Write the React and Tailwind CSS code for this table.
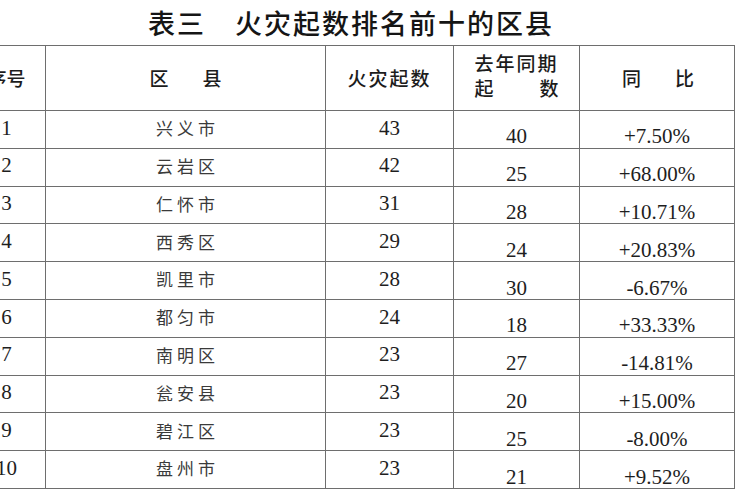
const rows = [
  ["1", "兴义市", "43", "40", "+7.50%"],
  ["2", "云岩区", "42", "25", "+68.00%"],
  ["3", "仁怀市", "31", "28", "+10.71%"],
  ["4", "西秀区", "29", "24", "+20.83%"],
  ["5", "凯里市", "28", "30", "-6.67%"],
  ["6", "都匀市", "24", "18", "+33.33%"],
  ["7", "南明区", "23", "27", "-14.81%"],
  ["8", "瓮安县", "23", "20", "+15.00%"],
  ["9", "碧江区", "23", "25", "-8.00%"],
  ["10", "盘州市", "23", "21", "+9.52%"],
];

const cjk = "font-['Noto_Sans_CJK_SC',sans-serif]";
const serif = "font-['Liberation_Serif','Times_New_Roman',serif]";
const cell = "border-[1.5px] border-[#6e6e6e] p-0 text-center";

export default function App() {
  return (
    <div className="w-[750px] h-[500px] bg-white overflow-hidden">
      <div className="ml-[-33px] w-[766px]">
        {/* title */}
        <div className={`h-[45px] pt-[2px] pl-[2px] flex items-center justify-center text-[27px] tracking-[2px] font-medium text-[#151515] ${cjk}`}>
          表三　火灾起数排名前十的区县
        </div>

        <table className="border-collapse table-fixed w-[766px]">
          <colgroup>
            <col className="w-[78px]" />
            <col className="w-[280px]" />
            <col className="w-[128px]" />
            <col className="w-[126px]" />
            <col className="w-[155px]" />
          </colgroup>
          <thead>
            <tr className={`h-[65px] text-[19px] font-medium text-[#1c1c1c] ${cjk}`}>
              <th className={`${cell} font-medium`}>序号</th>
              <th className={`${cell} font-medium`}>
                <div className="flex justify-center gap-[34px]">
                  <span>区</span>
                  <span>县</span>
                </div>
              </th>
              <th className={`${cell} font-medium tracking-[2px]`}>火灾起数</th>
              <th className={`${cell} font-medium`}>
                <div className="w-[84px] mx-auto leading-[25px] pb-[6px]">
                  <div className="tracking-[2px] text-left">去年同期</div>
                  <div className="flex justify-between">
                    <span>起</span>
                    <span>数</span>
                  </div>
                </div>
              </th>
              <th className={`${cell} font-medium`}>
                <div className="flex justify-center gap-[34px] pl-[2px]">
                  <span>同</span>
                  <span>比</span>
                </div>
              </th>
            </tr>
          </thead>
          <tbody>
            {rows.map((r) => (
              <tr key={r[0]} className="h-[37.8px]">
                <td className={`${cell} ${serif} text-[21px] text-[#1e1e1e] pb-[2px]`}>{r[0]}</td>
                <td className={`${cell} ${cjk} text-[17px] text-[#3a3a3a] tracking-[4px] pl-[4px] pb-[3px]`}>{r[1]}</td>
                <td className={`${cell} ${serif} text-[21px] text-[#1e1e1e] pb-[2px]`}>{r[2]}</td>
                <td className={`${cell} ${serif} text-[21px] text-[#1e1e1e] pt-[15px] leading-none`}>{r[3]}</td>
                <td className={`${cell} ${serif} text-[21px] text-[#1e1e1e] pt-[15px] leading-none`}>{r[4]}</td>
              </tr>
            ))}
          </tbody>
        </table>
      </div>
    </div>
  );
}
